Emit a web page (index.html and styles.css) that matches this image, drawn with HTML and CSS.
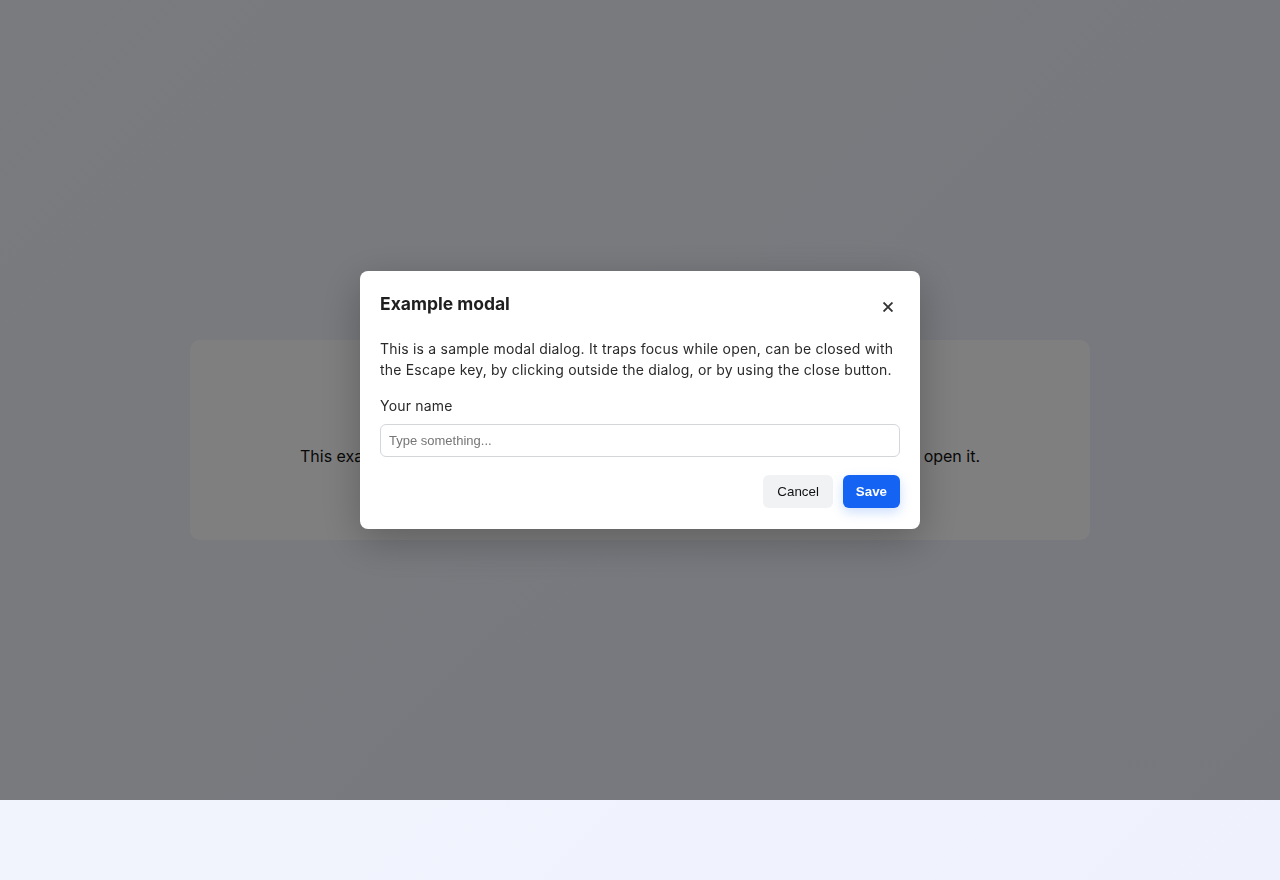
FILE: index.html
```html
<!DOCTYPE html>
<html lang="en">
<head>
<meta charset="utf-8">
<title>Accessible modal</title>
<link rel="stylesheet" href="styles.css">
</head>
<body>
<main class="page">
  <section class="card">
    <h1 class="card-title">Accessible modal</h1>
    <p class="card-text">This example demonstrates an accessible modal dialog. Press the button below to open it.</p>
  </section>
</main>
<div class="overlay">
  <div class="modal" role="dialog" aria-modal="true" aria-labelledby="modal-title">
    <div class="modal-header">
      <h2 class="modal-title" id="modal-title">Example modal</h2>
      <button class="close-btn" type="button" aria-label="Close">
        <svg width="10" height="10" viewBox="0 0 10 10"><path d="M1.2 1.2 L8.8 8.8 M8.8 1.2 L1.2 8.8" stroke="#333333" stroke-width="1.9" stroke-linecap="square"/></svg>
      </button>
    </div>
    <p class="modal-text">This is a sample modal dialog. It traps focus while open, can be closed with the Escape key, by clicking outside the dialog, or by using the close button.</p>
    <label class="field-label" for="name">Your name</label>
    <input class="field-input" id="name" type="text" placeholder="Type something...">
    <div class="modal-footer">
      <button class="btn btn-cancel" type="button">Cancel</button>
      <button class="btn btn-save" type="button">Save</button>
    </div>
  </div>
</div>
</body>
</html>
```
FILE: styles.css
```css
html, body {
  margin: 0;
  padding: 0;
}
body {
  font-family: Inter, "Liberation Sans", sans-serif;
  color: #111111;
  background: linear-gradient(135deg, #f3f6fd 0%, #eff1fd 100%);
  min-height: 100vh;
}
.page {
  min-height: 100vh;
  display: flex;
  align-items: center;
  justify-content: center;
}
.card {
  width: 900px;
  height: 200px;
  box-sizing: border-box;
  background: #ffffff;
  border-radius: 10px;
  display: flex;
  flex-direction: column;
  align-items: center;
  justify-content: center;
  padding: 0 40px;
}
.card-title {
  margin: 0 0 8px;
  font-size: 20px;
  line-height: 24px;
  font-weight: 700;
}
.card-text {
  margin: 0;
  font-size: 16px;
  line-height: 24px;
  text-align: center;
  white-space: nowrap;
}
.overlay {
  position: fixed;
  left: 0;
  top: 0;
  width: 100%;
  height: 800px;
  background: rgba(0, 0, 0, 0.5);
  display: flex;
  align-items: center;
  justify-content: center;
}
.modal {
  width: 560px;
  box-sizing: border-box;
  background: #ffffff;
  border-radius: 8px;
  padding: 21px 20px 21px;
  box-shadow: 0 12px 40px rgba(0, 0, 0, 0.25);
  display: flex;
  flex-direction: column;
}
.modal-header {
  display: flex;
  justify-content: space-between;
  align-items: flex-start;
  height: 28px;
}
.modal-title {
  margin: 0;
  font-size: 17.5px;
  line-height: 24px;
  font-weight: 700;
  color: #1f1f1f;
}
.close-btn {
  width: 24px;
  height: 24px;
  margin-top: 3px;
  padding: 0;
  border: none;
  background: transparent;
  display: flex;
  align-items: center;
  justify-content: center;
}
.modal-text {
  margin: 18px 0 0;
  font-size: 14px;
  line-height: 21px;
  letter-spacing: 0.2px;
  color: #2a2a2a;
}
.field-label {
  margin-top: 15px;
  font-size: 14px;
  line-height: 21px;
  letter-spacing: 0.2px;
  color: #2a2a2a;
}
.field-input {
  margin-top: 8px;
  height: 33px;
  box-sizing: border-box;
  border: 1px solid #d4d6da;
  border-radius: 6px;
  padding: 0 8px;
  font-family: "Liberation Sans", Arial, sans-serif;
  font-size: 13px;
  color: #222;
  outline: none;
}
.field-input::placeholder {
  color: #767676;
}
.modal-footer {
  margin-top: 18px;
  display: flex;
  justify-content: flex-end;
  gap: 10px;
}
.btn {
  font-family: "Liberation Sans", Arial, sans-serif;
  font-size: 13.333px;
  line-height: 17px;
  padding: 8px 14px;
  border: none;
  border-radius: 6px;
}
.btn-cancel {
  background: #f1f2f4;
  color: #111;
}
.btn-save {
  padding: 8px 13px;
  background: #1463f3;
  color: #ffffff;
  font-weight: 600;
  box-shadow: 0 4px 12px rgba(20, 99, 243, 0.22);
}
```
